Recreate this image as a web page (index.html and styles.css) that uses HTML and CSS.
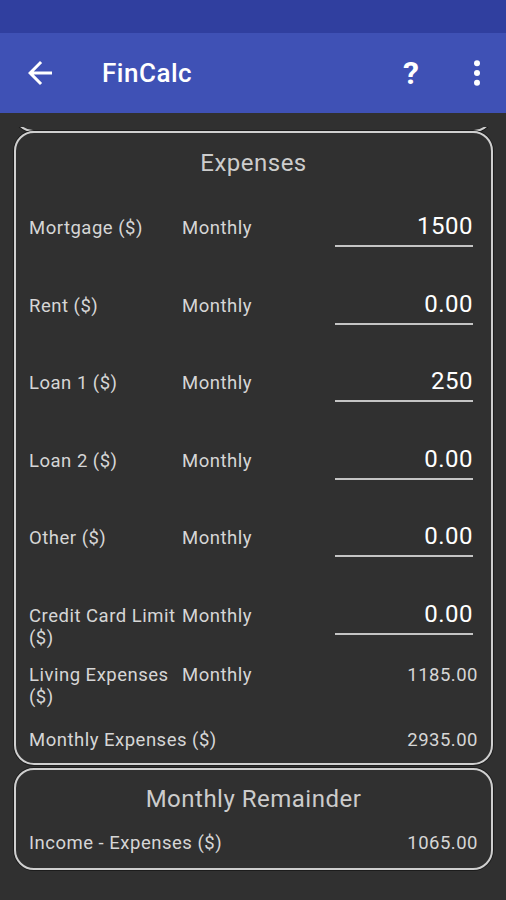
FILE: index.html
```html
<!DOCTYPE html>
<html>
	<head>
		<meta charset="utf-8">
		<title>FinCalc</title>
		<link rel="stylesheet" href="styles.css">
	</head>
	<body>
		<div class="statusbar"></div>
		<div class="appbar">
			<svg class="back" viewBox="0 0 24 24" width="36" height="36"><path fill="#fff" d="M20 11H7.83l5.59-5.59L12 4l-8 8 8 8 1.41-1.41L7.83 13H20v-2z"/></svg>
			<div class="titlu">FinCalc</div>
			<div class="help">?</div>
			<svg class="more" viewBox="0 0 24 24" width="36" height="36"><circle cx="12" cy="5.5" r="2" fill="#fff"/><circle cx="12" cy="12" r="2" fill="#fff"/><circle cx="12" cy="18.5" r="2" fill="#fff"/></svg>
		</div>
		<div class="continut">
			<div class="scroll">
				<div class="card prev"></div>
				<div class="card expenses">
					<div class="card-titlu">Expenses</div>

					<div class="rand">
						<div class="eticheta">Mortgage ($)</div>
						<div class="perioada">Monthly</div>
						<div class="camp">1500</div>
					</div>
					<div class="rand">
						<div class="eticheta">Rent ($)</div>
						<div class="perioada">Monthly</div>
						<div class="camp">0.00</div>
					</div>
					<div class="rand">
						<div class="eticheta">Loan 1 ($)</div>
						<div class="perioada">Monthly</div>
						<div class="camp">250</div>
					</div>
					<div class="rand">
						<div class="eticheta">Loan 2 ($)</div>
						<div class="perioada">Monthly</div>
						<div class="camp">0.00</div>
					</div>
					<div class="rand">
						<div class="eticheta">Other ($)</div>
						<div class="perioada">Monthly</div>
						<div class="camp">0.00</div>
					</div>
					<div class="rand rand-ultim">
						<div class="eticheta">Credit Card Limit ($)</div>
						<div class="perioada">Monthly</div>
						<div class="camp">0.00</div>
					</div>

					<div class="rand-total">
						<div class="eticheta">Living Expenses ($)</div>
						<div class="perioada">Monthly</div>
						<div class="valoare">1185.00</div>
					</div>
					<div class="rand-total rand-suma">
						<div class="eticheta">Monthly Expenses ($)</div>
						<div class="valoare">2935.00</div>
					</div>
				</div>

				<div class="card remainder">
					<div class="card-titlu">Monthly Remainder</div>
					<div class="rand-total rand-suma">
						<div class="eticheta">Income - Expenses ($)</div>
						<div class="valoare">1065.00</div>
					</div>
				</div>
			</div>
		</div>
	</body>
</html>
```

FILE: styles.css
```css
body {
	margin: 0;
	background-color: #303030;
	font-family: Roboto, "Liberation Sans", sans-serif;
	width: 506px;
	height: 900px;
	overflow: hidden;
}

.statusbar {
	height: 33px;
	background-color: #303f9f;
}

.appbar {
	height: 80px;
	background-color: #3f51b5;
	display: flex;
	align-items: center;
	color: #ffffff;
}

.back {
	margin-left: 22px;
}

.titlu {
	margin-left: 44px;
	font-size: 26px;
	font-weight: 500;
	letter-spacing: 0.5px;
	flex: 1;
}

.help {
	font-size: 32px;
	font-weight: bold;
	width: 20px;
	text-align: center;
	margin-right: 38px;
}

.more {
	margin-right: 11px;
}

.continut {
	padding-top: 14px;
}

.scroll {
	height: 773px;
	overflow: hidden;
}

.card {
	margin: 0 13px 0 14px;
	border: 2px solid #cfcfcf;
	border-radius: 20px;
	box-shadow: 0 0 0 1px #1c1c1c;
	color: #d9d9d9;
}

.prev {
	height: 34px;
	margin-top: -33px;
}

.expenses {
	margin-top: -1px;
	padding: 16px 13px 12px 13px;
}

.remainder {
	margin-top: 3px;
	padding: 15px 13px 14px 13px;
}

.card-titlu {
	text-align: center;
	font-size: 24px;
	letter-spacing: 0.5px;
	line-height: 28px;
	color: #cccccc;
}

.expenses .card-titlu {
	margin-bottom: 35px;
}

.remainder .card-titlu {
	margin-bottom: 14px;
}

.rand {
	display: grid;
	grid-template-columns: 153px 1fr 143px;
	align-items: start;
	margin-bottom: 42.6px;
}

.rand-ultim {
	margin-bottom: 10px;
}

.eticheta, .perioada {
	font-size: 18.5px;
	letter-spacing: 0.5px;
	line-height: 22px;
	margin-top: 5px;
	color: #d6d6d6;
}

.camp {
	font-size: 24px;
	letter-spacing: 0.5px;
	line-height: 28px;
	padding-bottom: 5px;
	text-align: right;
	color: #ffffff;
	border-bottom: 2px solid #c4c4c4;
	margin-right: 5px;
}

.rand-total {
	display: grid;
	grid-template-columns: 153px 1fr 120px;
	align-items: start;
	margin-bottom: 16px;
}

.rand-suma {
	grid-template-columns: 1fr 120px;
	margin-bottom: 0;
}

.valoare {
	font-size: 18.5px;
	letter-spacing: 0.5px;
	line-height: 22px;
	margin-top: 5px;
	text-align: right;
	color: #d6d6d6;
}
```
